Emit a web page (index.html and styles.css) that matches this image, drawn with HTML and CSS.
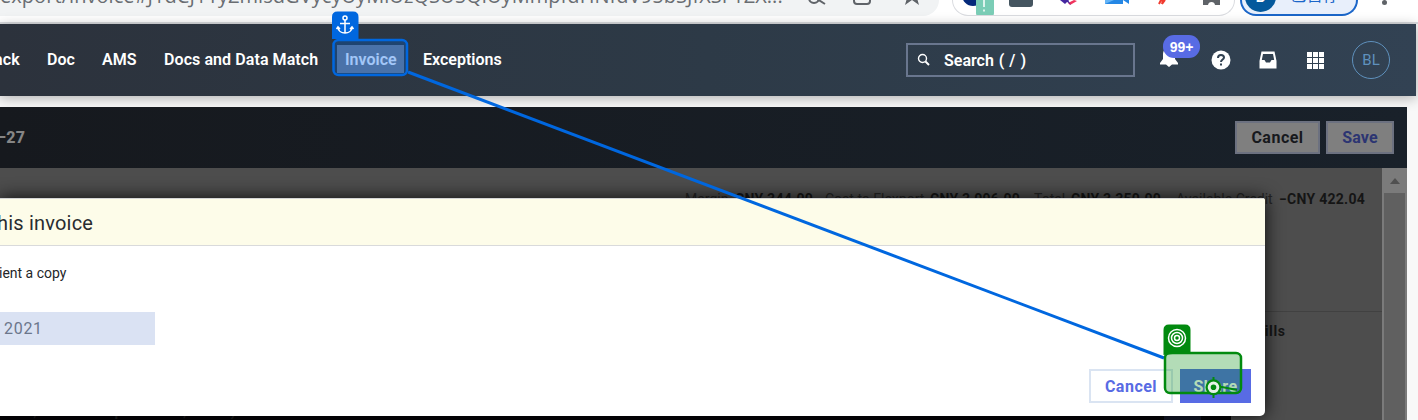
FILE: index.html
```html
<!DOCTYPE html>
<html lang="en">
<head>
<meta charset="utf-8">
<title>Invoice</title>
<link rel="stylesheet" href="styles.css">
</head>
<body>
<div class="browser">
  <div class="address"><span class="url">export/invoice#J1dCJ11yZmlsdGVycyUyMiUzQSU5QiUyMmpfdHNfdV95bSJfXSF1ZX...</span>
    <svg class="address-icons" width="130" height="16" viewBox="0 0 130 16" fill="none" stroke="#5f6368" stroke-width="2"><circle cx="14" cy="-2" r="5"/><path d="M17-1l8 5"/><rect x="54" y="-11" width="16" height="15" rx="3"/><path d="M105 5l7-5 7 5-2-7h-10z" fill="#5f6368" stroke="none"/></svg>
  </div>
  <div class="extensions">
    <svg width="284" height="16" viewBox="953 0 284 16"><circle cx="973" cy="-5" r="11" fill="#04297a"/><path d="M976 0h18v13q0 3-3 3h-12q-3 0-3-3z" fill="#7bcdb6"/><path d="M984 0v7m0 2.500v2" stroke="#fff" stroke-width="1.500"/><path d="M1009 0h24v4q0 3-3 3h-18q-3 0-3-3z" fill="#455560"/><path d="M1060 0l5 4 4-4z" fill="#4527a0"/><path d="M1068 3l6-3 3 1-7 4z" fill="#f0335c"/><path d="M1066 1l5 4-3-5z" fill="#4527a0"/><path d="M1105 0h18v4h-18zM1123 0h6v4z" fill="#2587e5"/><path d="M1105 0h9l-9 4z" fill="#65b4f6"/><path d="M1159 4l2-4 2 0-1 4 3-4" stroke="#f13b2f" stroke-width="2" fill="none"/><path d="M1203 0h17v5h-5q-.5-3-3.500-3t-3.500 3h-5z" fill="#5f6368"/></svg>
  </div>
  <div class="profile"><span class="profile-dot">B</span><span class="profile-text">已暂停</span></div>
  <span class="kebab"></span>
</div>
<nav class="nav">
  <span class="item w-ack">ack</span><span class="item w-doc">Doc</span><span class="item w-ams">AMS</span><span class="item w-docs">Docs and Data Match</span><span class="item w-inv">Invoice</span><span class="item w-exc">Exceptions</span>
  <div class="search">
    <svg width="14" height="14" viewBox="0 0 14 14" fill="none" stroke="#fff"><circle cx="5.500" cy="5.500" r="4" stroke-width="1.400"/><path d="M8.500 8.500l3.500 3.500" stroke-width="2"/></svg>
    <span>Search ( / )</span>
  </div>
  <div class="bell"><svg width="20" height="24" viewBox="0 0 20 24" fill="#fff"><path d="M10 3c-4 0-6 3-6 6v5l-3 4v1.500h18V18l-3-4V9c0-3-2-6-6-6zM7 19.500h6l-3 2.500z"/></svg><span class="count">99+</span></div>
  <svg class="help" width="20" height="20" viewBox="0 0 20 20"><circle cx="10" cy="10" r="9.500" fill="#fff"/><path d="M7 8q0-3 3-3t3 2.500c0 2-3 2-3 4.500" fill="none" stroke="#314151" stroke-width="2"/><path d="M9 13.500h2v2H9z" fill="#314151"/></svg>
  <svg class="inbox" width="18" height="18" viewBox="0 0 18 18"><path d="M2.500.5h13L17.500 10v7.500H.5V10z" fill="#fff"/><path d="M4 3h10l1.200 6H12.500l-1.500 2.500H7L5.500 9H2.800z" fill="#314151"/></svg>
  <svg class="apps" width="17" height="17" viewBox="0 0 17 17" fill="#fff"><path d="M0 0h5v5H0zM6 0h5v5H6zM12 0h5v5h-5zM0 6h5v5H0zM6 6h5v5H6zM12 6h5v5h-5zM0 12h5v5H0zM6 12h5v5H6zM12 12h5v5h-5z"/></svg>
  <span class="avatar">BL</span>
</nav>
<main class="panel">
  <header class="panel-head"><b class="panel-title">–27</b><button class="btn cancel">Cancel</button><button class="btn save">Save</button></header>
  <div class="panel-body">
    <section class="details">
      <div class="totals"><span class="t1">Margin</span><b class="t2">CNY 344.00</b><span class="t3">Cost to Flexport</span><b class="t4">CNY 3,096.00</b><span class="t5">Total</span><b class="t6">CNY 3,350.00</b><span class="t7">Available Credit</span><b class="t8">−CNY 422.04</b></div>
      <h3 class="bills">Bills</h3>
      <div class="footer"><span class="footer-text">00.00, Cost to Flexport CNY 3,006.00)</span><i class="footer-chip"></i></div>
    </section>
    <div class="scroll"><i class="arrow"></i><i class="thumb"></i></div>
  </div>
</main>
<section class="modal">
  <h2 class="modal-title">his invoice</h2>
  <p class="copy">ient a copy</p>
  <div class="date">2021</div>
  <div class="actions"><button class="act plain">Cancel</button><button class="act primary">Share</button></div>
</section>
<svg class="overlay" width="1418" height="420" viewBox="0 0 1418 420" fill="none">
  <path d="M408 72L1164 358" stroke="#0067df" stroke-width="3"/>
  <path d="M332 44V17q0-5.500 5.500-5.500h15.500q5.500 0 5.500 5.500v22h-26.500z" fill="#0067df"/>
  <rect x="333.500" y="40" width="73.500" height="35" rx="5" fill="#0067df" fill-opacity=".3"/>
  <rect x="337" y="45" width="67" height="28" fill="#8bbaff" fill-opacity=".4"/>
  <rect x="333.500" y="40" width="73.500" height="35" rx="5" stroke="#0067df" stroke-width="2.500"/>
  <g stroke="#fff" stroke-width="1.500"><circle cx="345" cy="18" r="2"/><path d="M345 20v13M340 23.500h10M338 27c0 8 14 8 14 0M336.500 29l1.500-2 2 2M350 29l2-2 1.500 2"/></g>
  <path d="M1163.500 355v-25q0-5.500 5.500-5.500h16q5.500 0 5.500 5.500v22z" fill="#028a0f"/>
  <rect x="1165" y="353" width="76" height="40" rx="5" fill="#028a0f" fill-opacity=".3" stroke="#028a0f" stroke-width="2.500"/>
  <g stroke="#fff" stroke-width="1.500"><circle cx="1177" cy="338" r="8.500"/><circle cx="1177" cy="338" r="5.500"/><circle cx="1177" cy="338" r="2.500"/></g>
  <path d="M1213.500 377v21M1206 387h16l15 3" stroke="#028a0f" stroke-width="2"/>
  <circle cx="1213.500" cy="387.300" r="5.500" fill="#028a0f" stroke="#028a0f" stroke-width="5"/><circle cx="1213.500" cy="387.300" r="4.300" stroke="#e5f3e7" stroke-width="3"/>
</svg>
</body>
</html>
```
FILE: styles.css
```css
* { box-sizing: border-box; }
body { margin: 0; width: 1418px; height: 420px; overflow: hidden; position: relative; background: #f8f8f8; font-family: Roboto, "Liberation Sans", sans-serif; display: flex; flex-direction: column; }
button { margin: 0; padding: 0; font-family: inherit; }
.browser { height: 24px; background: #fff; border-bottom: 2px solid #dadcdf; display: flex; align-items: flex-start; flex: none; }
.address { width: 939px; height: 16px; background: #f1f3f4; border-bottom-right-radius: 16px; display: flex; overflow: hidden; }
.url { width: 800px; flex: none; font: 20px/24px "Open Sans", sans-serif; letter-spacing: .06px; color: #696d72; white-space: nowrap; margin-top: -16px; }
.address-icons { flex: none; }
.extensions { margin-left: 13px; width: 283px; height: 16px; border: 1px solid #dadce0; border-top: 0; border-radius: 0 0 18px 18px; overflow: hidden; flex: none; }
.extensions svg { display: block; }
.profile { margin-left: 5px; width: 118px; height: 16px; background: #e8effb; border: 2px solid #1b66c9; border-top: 0; border-radius: 0 0 18px 18px; display: flex; overflow: hidden; }
.profile-dot { margin: -18px 0 0 3px; width: 31px; height: 30px; border-radius: 50%; background: #04599c; color: #fff; font: 700 15px/30px Roboto, sans-serif; text-align: center; flex: none; }
.profile-text { margin: -15px 0 0 14px; font: 16.5px/18px "Noto Sans CJK SC", sans-serif; color: #1b66c9; white-space: nowrap; }
.kebab { width: 5px; height: 5px; border-radius: 50%; background: #5f6368; margin-left: 24px; }
.nav { width: 1416px; height: 72px; background: linear-gradient(90deg, #2c323c, #2d3a47 50%, #324253); box-shadow: 0 2px 12px rgba(0,0,0,.3); display: flex; align-items: center; flex: none; color: #fff; font-size: 16px; font-weight: 600; white-space: nowrap; }
.item { flex: none; margin-right: 27px; padding-bottom: 2px; }
.w-ack { width: 26px; margin-left: -6px; letter-spacing: .2px; }
.w-doc { width: 28px; }
.w-ams { width: 35px; }
.w-docs { width: 154px; letter-spacing: .08px; }
.w-inv { width: 51px; }
.w-exc { width: 456px; }
.search { width: 229px; height: 34px; border: 2px solid #69768e; display: flex; align-items: center; padding-left: 9px; gap: 13px; flex: none; word-spacing: 1px; }
.bell { position: relative; margin-left: 24px; width: 20px; height: 24px; top: -3px; }
.count { position: absolute; left: 4px; top: -10px; width: 37px; height: 23px; border-radius: 11px; background: #586be4; font: 700 14px/24px "Liberation Sans", sans-serif; text-align: center; }
.help { margin-left: 32px; }
.inbox { margin-left: 28px; }
.apps { margin-left: 30px; }
.avatar { margin-left: 28px; width: 38px; height: 38px; border: 1px solid #5f91bd; border-radius: 50%; color: #5f91bd; font-size: 15px; font-weight: 400; line-height: 37px; text-align: center; flex: none; }
.panel { margin-top: 11px; width: 1407px; height: 313px; position: relative; }
.panel-head { height: 61px; background: linear-gradient(90deg, #16191e, #19212a); display: flex; align-items: center; padding-right: 13px; }
.panel-title { flex: 1; color: #858585; font-size: 16px; font-weight: 800; letter-spacing: .3px; margin-left: -4px; }
.btn { height: 33px; background: #7f7f7f; border: 2px solid #6c7180; font-size: 16px; font-weight: 700; letter-spacing: .5px; }
.cancel { width: 85px; color: #17191d; margin-right: 6px; }
.save { width: 68px; color: #2c3572; letter-spacing: .2px; }
.panel-body { height: 252px; display: flex; }
.details { width: 1382px; height: 252px; background: #4d4d4d; display: flex; flex-direction: column; }
.totals { height: 144px; padding: 22px 0 0 685px; border-bottom: 1px solid #414141; display: flex; font-size: 14px; line-height: 18px; color: #252525; white-space: nowrap; }
.totals > * { flex: none; }
.totals b { color: #151515; letter-spacing: .28px; }
.t1 { width: 50px; } .t2 { width: 90px; } .t3 { width: 105px; } .t4 { width: 104px; }
.t5 { width: 37px; } .t6 { width: 105px; } .t7 { width: 103px; }
.bills { margin: 10px 0 0 1255px; height: 18px; font-size: 14px; line-height: 18px; color: #151515; letter-spacing: .7px; }
.footer { width: 1231px; height: 21px; margin-top: 59px; background: #050407; display: flex; overflow: hidden; }
.footer-text { margin-top: 2px; margin-left: -3px; width: 1167px; height: 19px; font: 700 14px/20px Roboto, sans-serif; color: #262626; white-space: nowrap; }
.footer-chip { width: 37px; background: #15182c; }
.scroll { width: 25px; background: #7b7b7b; display: flex; flex-direction: column; align-items: center; }
.arrow { margin-top: 10px; border: 5.500px solid transparent; border-top: 0; border-bottom: 6px solid #505050; }
.thumb { margin-top: 9px; width: 21px; height: 230px; background: #606060; }
.modal { position: absolute; left: 0; top: 198px; width: 1265px; height: 218px; background: #fff; border-radius: 0 3px 5px 0; box-shadow: 0 0 18px rgba(0,0,0,.85); overflow: hidden; }
.modal-title { margin: 0; height: 48px; background: #fdfce9; border-top: 1px solid #d4d5d5; border-bottom: 1px solid #d9dadb; color: #292c30; font-size: 20px; font-weight: 400; line-height: 48px; text-indent: -3px; letter-spacing: .2px; }
.copy { margin: 18px 0 0; font-size: 14px; line-height: 18px; color: #242629; text-indent: -1px; }
.date { width: 155px; height: 33px; margin-top: 30px; padding-left: 4px; background: #dae2f3; color: #6b768b; font-size: 16px; line-height: 34px; letter-spacing: .7px; }
.actions { display: flex; justify-content: flex-end; gap: 7px; margin-top: 24px; padding-right: 14px; }
.act { height: 34px; font-size: 16px; font-weight: 700; letter-spacing: .5px; }
.plain { width: 84px; border: 2px solid #dae4f2; background: #fff; color: #586be4; }
.primary { width: 71px; border: 0; background: #586be4; color: #fff; }
.overlay { position: absolute; left: 0; top: 0; }
```
